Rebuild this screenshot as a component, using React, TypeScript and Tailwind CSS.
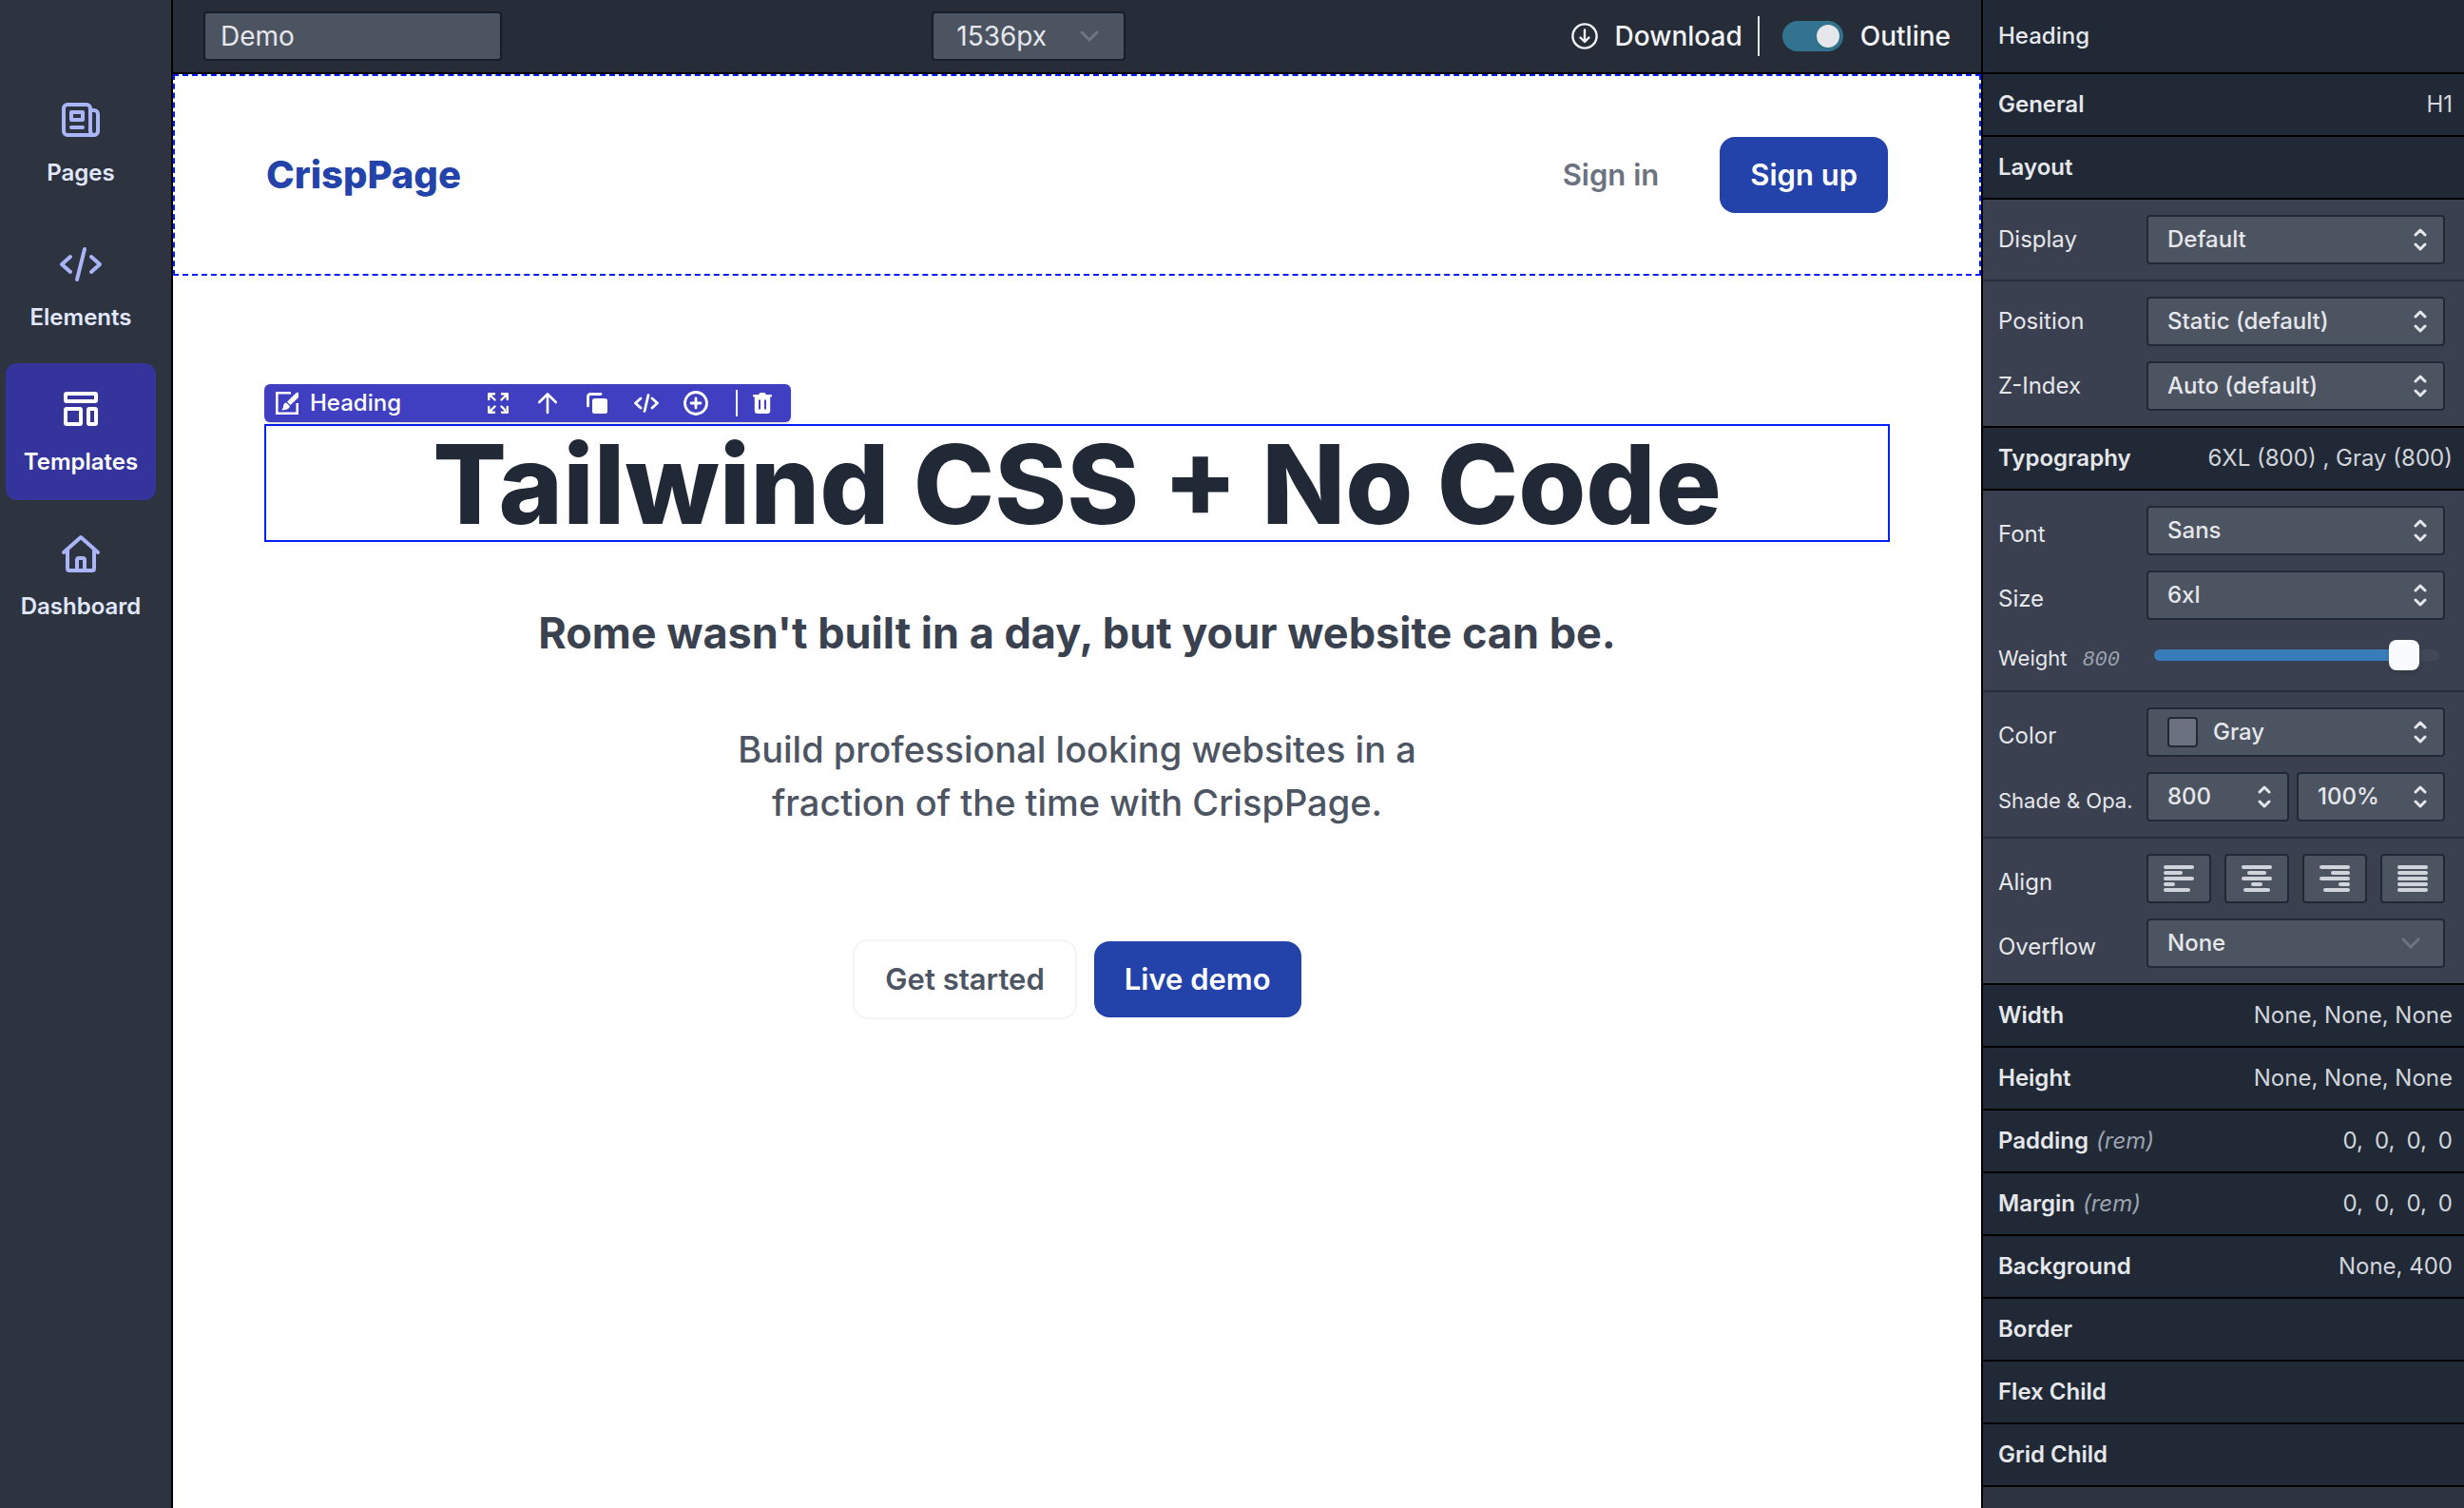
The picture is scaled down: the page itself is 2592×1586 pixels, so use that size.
import React, { useState } from 'react'

const navItems = ['Pages', 'Elements', 'Templates', 'Dashboard']

function NavIcon({ name }: { name: string }) {
  return (
    <svg
      className="h-12 w-12"
      viewBox="0 0 48 48"
      fill="none"
      stroke="currentColor"
      strokeWidth="4"
      strokeLinecap="round"
      strokeLinejoin="round"
      aria-hidden="true"
    >
      {name === 'Pages' && (
        <>
          <path d="M38 40H10a4 4 0 0 1-4-4V12a4 4 0 0 1 4-4h20a4 4 0 0 1 4 4v24a4 4 0 0 0 4 4z" />
          <path d="M34 14h4a4 4 0 0 1 4 4v18a4 4 0 0 1-4 4" />
          <path d="M14 16h12v8H14zM14 32h12" />
        </>
      )}
      {name === 'Elements' && <path d="M13 16l-9 8 9 8M35 16l9 8-9 8M28 8l-8 32" />}
      {name === 'Templates' && (
        <>
          <rect x="8" y="8" width="32" height="8" rx="1" />
          <rect x="8" y="24" width="16" height="16" rx="1" />
          <rect x="32" y="24" width="8" height="16" rx="1" />
        </>
      )}
      {name === 'Dashboard' && (
        <>
          <path d="M6 23L24 7l18 16" />
          <path d="M10 21v19a2 2 0 0 0 2 2h24a2 2 0 0 0 2-2V21" />
          <path d="M20 42V31a2 2 0 0 1 2-2h4a2 2 0 0 1 2 2v11" />
        </>
      )}
    </svg>
  )
}

function Sidebar() {
  const [active, setActive] = useState('Templates')
  return (
    <nav className="flex w-[182px] shrink-0 flex-col gap-2 border-r-2 border-black bg-[#2d3440] pt-[78px] pr-4 pl-1.5">
      {navItems.map((item) => (
        <button
          key={item}
          type="button"
          onClick={() => setActive(item)}
          className={
            item === active
              ? 'flex flex-col items-center gap-4 rounded-xl bg-[#34349c] py-6 text-white'
              : 'flex flex-col items-center gap-4 rounded-xl py-6 text-[#aab4f8]'
          }
        >
          <NavIcon name={item} />
          <span className={item === active ? 'text-2xl font-semibold' : 'text-2xl font-semibold text-[#e1e7fd]'}>
            {item}
          </span>
        </button>
      ))}
    </nav>
  )
}

function ChevronDown() {
  return (
    <svg className="h-4 w-6" viewBox="0 0 24 16" fill="none" stroke="currentColor" strokeWidth="3" strokeLinecap="round" strokeLinejoin="round" aria-hidden="true">
      <path d="M4 4l8 8 8-8" />
    </svg>
  )
}

function ChevronUpDown() {
  return (
    <svg className="h-6 w-4" viewBox="0 0 16 24" fill="none" stroke="currentColor" strokeWidth="3" strokeLinecap="round" strokeLinejoin="round" aria-hidden="true">
      <path d="M3 7l5-5 5 5M3 17l5 5 5-5" />
    </svg>
  )
}

function TopBar() {
  const [outline, setOutline] = useState(true)
  return (
    <header className="flex h-[78px] items-center justify-between border-b-2 border-black bg-[#262c38] px-8">
      <input
        type="text"
        aria-label="Project name"
        defaultValue="Demo"
        className="h-[52px] w-[314px] rounded border-2 border-[#161d2b] bg-[#4d5461] px-4 text-[28px] text-[#e5e7eb]"
      />
      <div className="relative">
        <select
          aria-label="Screen width"
          className="h-[52px] w-[204px] appearance-none rounded border-2 border-[#161d2b] bg-[#4d5461] px-6 text-[28px] text-[#e5e7eb]"
        >
          <option>1536px</option>
        </select>
        <span className="pointer-events-none absolute inset-y-0 right-[26px] flex items-center text-[#6f7582]">
          <ChevronDown />
        </span>
      </div>
      <div className="flex items-center text-[28px] font-medium text-[#f3f4f6]">
        <button type="button" className="flex items-center gap-[18px] px-4">
          <svg className="h-7 w-7" viewBox="0 0 28 28" fill="none" stroke="currentColor" strokeWidth="2.4" strokeLinecap="round" strokeLinejoin="round" aria-hidden="true">
            <circle cx="14" cy="14" r="12.6" />
            <path d="M14 7.5v12M9.5 15.5L14 20l4.5-4.5" />
          </svg>
          Download
        </button>
        <div className="h-[42px] w-0.5 bg-[#e5e7eb]" />
        <button
          type="button"
          role="switch"
          id="outline"
          aria-checked={outline}
          onClick={() => setOutline(!outline)}
          className={
            outline
              ? 'ml-6 flex h-8 w-16 items-center justify-end rounded-full bg-[#32748f] px-1'
              : 'ml-6 flex h-8 w-16 items-center rounded-full bg-[#4d5461] px-1'
          }
        >
          <span className="h-6 w-6 rounded-full bg-[#e5e7eb] shadow" />
        </button>
        <label htmlFor="outline" className="ml-[18px]">
          Outline
        </label>
      </div>
    </header>
  )
}

function ElementToolbar() {
  const btn = 'flex w-[52px] justify-center'
  return (
    <div className="absolute bottom-full -left-0.5 mb-1 flex h-10 w-[554px] items-center rounded-md bg-[#403fc1] pr-1 pl-3 text-white shadow-md">
      <svg className="h-6 w-6" viewBox="0 0 24 24" aria-hidden="true">
        <path d="M16 1.3H1.3v21.4h21.4V12" fill="none" stroke="currentColor" strokeWidth="2.6" />
        <path d="M24 .5v5.500l-8.500 8-3.500-3.500L21.500 1.200z" fill="currentColor" />
        <path d="M11 11.5l3.800 3.600c-.3 3.400-4 4.600-9 3.900 2.300-1 2-2.500 2.400-4.500.4-1.900 1.300-2.900 2.800-3z" fill="currentColor" />
      </svg>
      <span className="ml-3 text-2xl font-medium">Heading</span>
      <div className="ml-auto flex items-center">
        <button type="button" aria-label="Expand" className={btn}>
          <svg className="h-[22px] w-[22px]" viewBox="0 0 22 22" fill="none" stroke="currentColor" strokeWidth="2.4" strokeLinecap="round" strokeLinejoin="round" aria-hidden="true">
            <path d="M7 1.2H1.2V7M1.5 1.5l6 6M15 1.2h5.8V7M20.5 1.5l-6 6M7 20.8H1.2V15M1.5 20.5l6-6M15 20.8h5.8V15M20.5 20.5l-6-6" />
          </svg>
        </button>
        <button type="button" aria-label="Select parent" className={btn}>
          <svg className="h-6 w-6" viewBox="0 0 24 24" fill="none" stroke="currentColor" strokeWidth="2.6" strokeLinecap="round" strokeLinejoin="round" aria-hidden="true">
            <path d="M12 22V2.5M3.3 11L12 2.3l8.700 8.700" />
          </svg>
        </button>
        <button type="button" aria-label="Duplicate" className={btn}>
          <svg className="h-6 w-6" viewBox="0 0 24 24" aria-hidden="true">
            <path d="M2.5 15V5a2.5 2.5 0 0 1 2.5-2.5h11" fill="none" stroke="currentColor" strokeWidth="2.8" strokeLinecap="round" />
            <rect x="7" y="7" width="16" height="16" rx="2.5" fill="currentColor" />
          </svg>
        </button>
        <button type="button" aria-label="Edit code" className={btn}>
          <svg className="h-6 w-[26px]" viewBox="0 0 26 24" fill="none" stroke="currentColor" strokeWidth="2.8" strokeLinecap="round" strokeLinejoin="round" aria-hidden="true">
            <path d="M7 7l-5.500 5L7 17M19 7l5.500 5-5.500 5M15 3.500l-4 17" />
          </svg>
        </button>
        <button type="button" aria-label="Add element" className={btn}>
          <svg className="h-[26px] w-[26px]" viewBox="0 0 26 26" fill="none" stroke="currentColor" strokeWidth="2.8" strokeLinecap="round" aria-hidden="true">
            <circle cx="13" cy="13" r="11.5" />
            <path d="M13 8v10M8 13h10" />
          </svg>
        </button>
        <div className="ml-4 h-7 w-0.5 bg-white" />
        <button type="button" aria-label="Delete" className={btn}>
          <svg className="h-6 w-5" viewBox="0 0 20 24" fill="currentColor" aria-hidden="true">
            <path d="M6.5 3V2.5A1.5 1.5 0 0 1 8 1h4a1.5 1.5 0 0 1 1.5 1.5V3H19a1 1 0 0 1 0 2.400h-.8V20a3 3 0 0 1-3 3H4.800a3 3 0 0 1-3-3V5.400H1A1 1 0 0 1 1 3zM6 8.500v10h2v-10zM12 8.500v10h2v-10z" fillRule="evenodd" />
          </svg>
        </button>
      </div>
    </div>
  )
}

function Canvas() {
  return (
    <div className="flex-1 bg-white">
      {/* Page header */}
      <div className="flex items-center justify-between border-2 border-dashed border-[#0020f5] px-24 py-16">
        <span className="text-[40px] leading-none font-extrabold text-[#2343aa]">CrispPage</span>
        <div className="flex items-center gap-16 text-[31px] font-semibold">
          <a href="#signin" className="text-[#6b7280]">
            Sign in
          </a>
          <a href="#signup" className="flex h-20 items-center rounded-2xl bg-[#2343aa] px-8 text-white">
            Sign up
          </a>
        </div>
      </div>

      {/* Hero */}
      <section className="flex flex-col px-24 pt-[156px] text-center">
        <div className="relative border-2 border-[#0020f5]">
          <ElementToolbar />
          <h1 className="pt-1 text-[115px] leading-[116px] font-extrabold text-[#212936]">Tailwind CSS + No Code</h1>
        </div>
        <h2 className="mt-16 text-[45px] leading-[64px] font-bold text-[#3a414f]">
          Rome wasn't built in a day, but your website can be.
        </h2>
        <p className="mx-auto mt-[62px] max-w-[760px] text-[38px] leading-[56px] font-medium text-[#4d5562]">
          Build professional looking websites in a fraction of the time with CrispPage.
        </p>
        <div className="mt-29 flex items-center justify-center gap-[18px] text-[31px] font-semibold">
          <button type="button" className="h-[84px] rounded-2xl border-2 border-[#f3f4f6] px-8 text-[#4d5562]">
            Get started
          </button>
          <button type="button" className="h-20 rounded-2xl bg-[#2343aa] px-8 text-white">
            Live demo
          </button>
        </div>
      </section>
    </div>
  )
}

function PanelRow({ title, unit, children }: { title: string; unit?: string; children?: React.ReactNode }) {
  return (
    <button
      type="button"
      className="flex h-[66px] w-full items-center justify-between border-b-2 border-black bg-[#212936] pr-3 pl-4 text-2xl"
    >
      <span className="font-semibold text-[#e5e7eb]">
        {title}
        {unit && <span className="ml-2 font-normal text-[#9ca3af] italic">({unit})</span>}
      </span>
      <span className="flex text-[#d1d5db]">{children}</span>
    </button>
  )
}

function Field({ label, id, low, small, children }: { label: string; id?: string; low?: boolean; small?: boolean; children: React.ReactNode }) {
  return (
    <div className={small ? 'flex items-center text-[22px] text-[#e5e7eb]' : 'flex items-center text-2xl text-[#e5e7eb]'}>
      <label htmlFor={id} className={low ? 'w-[156px] shrink-0 pt-2 whitespace-nowrap' : 'w-[156px] shrink-0 whitespace-nowrap'}>
        {label}
      </label>
      <div className="flex flex-1 text-2xl">{children}</div>
    </div>
  )
}

function Select({ id, label, value, swatch, plain, grow }: { id?: string; label?: string; value: string; swatch?: boolean; plain?: boolean; grow?: string }) {
  return (
    <div className={grow ? 'relative ' + grow : 'relative flex-1'}>
      <select
        id={id}
        aria-label={label}
        className={
          swatch
            ? 'h-[52px] w-full appearance-none rounded border-2 border-[#212936] bg-[#4d5461] pl-[68px] font-medium'
            : 'h-[52px] w-full appearance-none rounded border-2 border-[#212936] bg-[#4d5461] pl-5 font-medium'
        }
      >
        <option>{value}</option>
      </select>
      {swatch && (
        <span className="pointer-events-none absolute top-2.5 left-[22px] h-8 w-8 rounded border-2 border-[#212936] bg-[#6b7180]" />
      )}
      <span
        className={
          plain
            ? 'pointer-events-none absolute inset-y-0 right-6 flex items-center text-[#6f7582]'
            : 'pointer-events-none absolute inset-y-0 right-[18px] flex items-center text-[#e5e7eb]'
        }
      >
        {plain ? <ChevronDown /> : <ChevronUpDown />}
      </span>
    </div>
  )
}

// x offset and length of each of the five bars
const alignments = [
  { name: 'Left', bars: [[0, 32], [0, 20], [0, 32], [0, 12], [0, 28]] },
  { name: 'Center', bars: [[0, 32], [6, 20], [0, 32], [10, 12], [2, 28]] },
  { name: 'Right', bars: [[0, 32], [12, 20], [0, 32], [20, 12], [4, 28]] },
  { name: 'Justify', bars: [[0, 32], [0, 32], [0, 32], [0, 32], [0, 32]] },
]

function WeightSlider() {
  const [weight, setWeight] = useState(800)
  const percent = ((weight - 100) / 800) * 100
  return (
    <div className="flex h-[42px] items-center text-[22px] text-[#e5e7eb]">
      <div className="flex w-[156px] shrink-0 items-baseline gap-4 pt-2">
        <label htmlFor="weight">Weight</label>
        <span className="font-['Liberation_Mono',monospace] text-[#9ca3af] italic">{weight}</span>
      </div>
      <div className="relative mr-1.5 ml-2 h-3 flex-1 rounded-full bg-[#414958]">
        <div className="h-3 rounded-full bg-[#377dba]" style={{ width: percent + '%' }} />
        <input
          id="weight"
          type="range"
          min="100"
          max="900"
          step="100"
          value={weight}
          onChange={(e) => setWeight(Number(e.target.value))}
          className="absolute -top-2.5 -left-4 h-8 w-[calc(100%+32px)] appearance-none bg-transparent [&::-webkit-slider-thumb]:h-8 [&::-webkit-slider-thumb]:w-8 [&::-webkit-slider-thumb]:appearance-none [&::-webkit-slider-thumb]:rounded-lg [&::-webkit-slider-thumb]:bg-[#fafbfc] [&::-webkit-slider-thumb]:shadow-md"
        />
      </div>
    </div>
  )
}

function Inspector() {
  const group = 'flex flex-col gap-4 border-b-2 bg-[#3a404f] py-4 pr-5 pl-4'
  return (
    <aside className="w-[508px] shrink-0 border-l-2 border-black bg-[#2d3440]">
      <h2 className="flex h-[78px] items-center border-b-2 border-black bg-[#212936] pl-4 text-2xl font-medium text-[#e5e7eb]">
        Heading
      </h2>
      <PanelRow title="General">H1</PanelRow>
      <PanelRow title="Layout" />
      <div className={group + ' border-[#272d3b]'}>
        <Field label="Display" id="display">
          <Select id="display" value="Default" />
        </Field>
      </div>
      <div className={group + ' border-black'}>
        <Field label="Position" id="position">
          <Select id="position" value="Static (default)" />
        </Field>
        <Field label="Z-Index" id="zindex">
          <Select id="zindex" value="Auto (default)" />
        </Field>
      </div>

      <PanelRow title="Typography">6XL (800) , Gray (800)</PanelRow>
      <div className={group + ' border-[#272d3b]'}>
        <Field label="Font" id="font" low>
          <Select id="font" value="Sans" />
        </Field>
        <Field label="Size" id="size" low>
          <Select id="size" value="6xl" />
        </Field>
        <WeightSlider />
      </div>
      <div className={group + ' border-[#272d3b]'}>
        <Field label="Color" id="color" low>
          <Select id="color" value="Gray" swatch />
        </Field>
        <Field label="Shade & Opa." id="shade" low small>
          <Select id="shade" value="800" grow="mr-2 w-[150px]" />
          <Select label="Opacity" value="100%" />
        </Field>
      </div>
      <div className={group + ' border-black'}>
        <Field label="Align" low>
          <div className="flex flex-1 justify-between">
            {alignments.map((a) => (
              <button
                key={a.name}
                type="button"
                aria-label={a.name}
                className="flex h-[52px] w-[68px] items-center justify-center rounded border-2 border-[#212936] bg-[#4d5461]"
              >
                <svg className="h-7 w-8" viewBox="0 0 32 28" fill="#d1d5db" aria-hidden="true">
                  {a.bars.map(([x, w], i) => (
                    <rect key={i} x={x} y={i * 6} width={w} height="4" rx="2" />
                  ))}
                </svg>
              </button>
            ))}
          </div>
        </Field>
        <Field label="Overflow" id="overflow" low>
          <Select id="overflow" value="None" plain />
        </Field>
      </div>

      <PanelRow title="Width">None, None, None</PanelRow>
      <PanelRow title="Height">None, None, None</PanelRow>
      <PanelRow title="Padding" unit="rem">
        <span className="flex gap-3">
          <span>0,</span> <span>0,</span> <span>0,</span> <span>0</span>
        </span>
      </PanelRow>
      <PanelRow title="Margin" unit="rem">
        <span className="flex gap-3">
          <span>0,</span> <span>0,</span> <span>0,</span> <span>0</span>
        </span>
      </PanelRow>
      <PanelRow title="Background">None, 400</PanelRow>
      <PanelRow title="Border" />
      <PanelRow title="Flex Child" />
      <PanelRow title="Grid Child" />
    </aside>
  )
}

export default function App() {
  return (
    <div className="flex min-h-screen font-['Inter',sans-serif]">
      <Sidebar />
      <main className="flex min-w-0 flex-1 flex-col">
        <TopBar />
        <Canvas />
      </main>
      <Inspector />
    </div>
  )
}
